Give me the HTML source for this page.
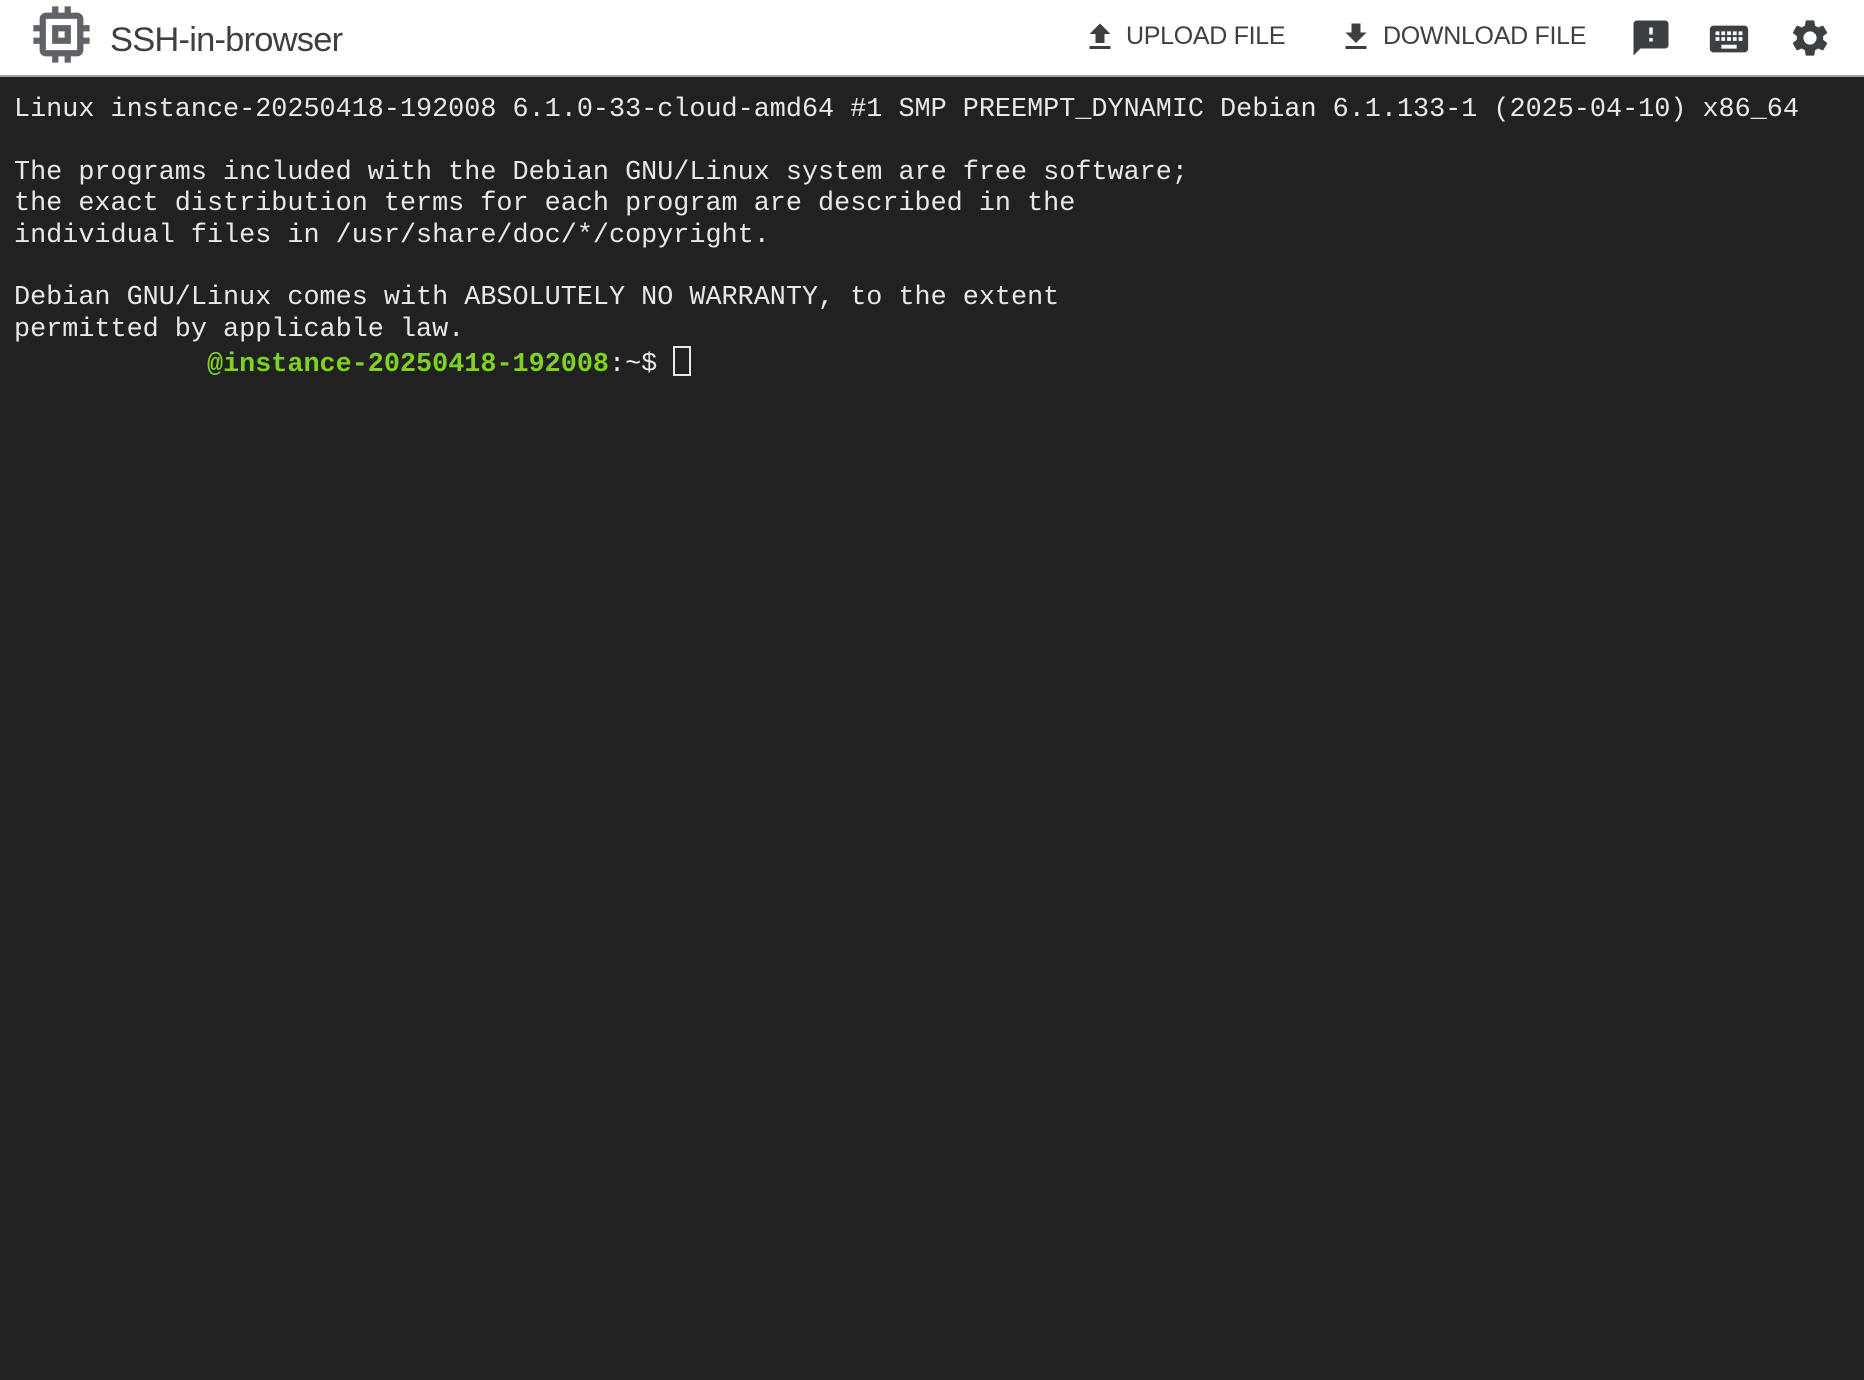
<!DOCTYPE html>
<html><head><meta charset="utf-8"><style>
html,body{margin:0;padding:0;width:1864px;height:1380px;overflow:hidden;background:#212121}
.hdr{position:absolute;left:0;top:0;width:1864px;height:75px;background:#fff;border-bottom:2px solid #9e9e9e}
.title{position:absolute;left:110px;top:21px;font:34.5px "Liberation Sans",sans-serif;color:#3c4043;letter-spacing:-0.8px}
.btn{position:absolute;top:22px;font:25px "Liberation Sans",sans-serif;color:#3c4043;letter-spacing:-0.3px}
svg{position:absolute}
.term{position:absolute;left:14px;top:95px;font:26.8px/31.4px "Liberation Mono",monospace;color:#e8e8e8;white-space:pre;margin:0}
.g{color:#7ed321;font-weight:bold}
.cur{display:inline-block;width:14px;height:26px;border:2px solid #e8e8e8;vertical-align:-5px;line-height:0}
</style></head><body>
<div class="hdr">
<svg style="left:24px;top:-3px" width="75" height="75" viewBox="0 0 24 24"><path fill="#5f6368" d="M15 9H9v6h6V9zm-2 4h-2v-2h2v2zm8-2V9h-2V7c0-1.1-.9-2-2-2h-2V3h-2v2h-2V3H9v2H7c-1.1 0-2 .9-2 2v2H3v2h2v2H3v2h2v2c0 1.1.9 2 2 2h2v2h2v-2h2v2h2v-2h2c1.1 0 2-.9 2-2v-2h2v-2h-2v-2h2zm-4 6H7V7h10v10z"/></svg>
<div class="title">SSH-in-browser</div>
<svg style="left:1082px;top:19px" width="36" height="36" viewBox="0 0 24 24"><path fill="#3c4043" d="M9 16h6v-6h4l-7-7-7 7h4zm-4 2h14v2H5z"/></svg>
<div class="btn" style="left:1126px">UPLOAD FILE</div>
<svg style="left:1338px;top:19px" width="36" height="36" viewBox="0 0 24 24"><path fill="#3c4043" d="M19 9h-4V3H9v6H5l7 7 7-7zM5 18v2h14v-2H5z"/></svg>
<div class="btn" style="left:1383px">DOWNLOAD FILE</div>
<svg style="left:1630px;top:17px" width="42" height="42" viewBox="0 0 24 24"><path fill="#3c4043" d="M20 2H4c-1.1 0-2 .9-2 2v18l4-4h14c1.1 0 2-.9 2-2V4c0-1.1-.9-2-2-2zm-7 12h-2v-2h2v2zm0-4h-2V6h2v4z"/></svg>
<svg style="left:1706px;top:16px" width="46" height="46" viewBox="0 0 24 24"><path fill="#3c4043" d="M20 5H4c-1.1 0-2 .9-2 2v10c0 1.1.9 2 2 2h16c1.1 0 2-.9 2-2V7c0-1.1-.9-2-2-2zm-9 3h2v2h-2V8zm0 3h2v2h-2v-2zM8 8h2v2H8V8zm0 3h2v2H8v-2zm-1 2H5v-2h2v2zm0-3H5V8h2v2zm9 7H8v-2h8v2zm0-4h-2v-2h2v2zm0-3h-2V8h2v2zm3 3h-2v-2h2v2zm0-3h-2V8h2v2z"/></svg>
<svg style="left:1788px;top:16px" width="44" height="44" viewBox="0 0 24 24"><path fill="#3c4043" d="M19.14 12.94c.04-.3.06-.61.06-.94 0-.32-.02-.64-.07-.94l2.03-1.58a.49.49 0 0 0 .12-.61l-1.92-3.32a.488.488 0 0 0-.59-.22l-2.39.96c-.5-.38-1.03-.7-1.62-.94l-.36-2.54a.484.484 0 0 0-.48-.41h-3.84c-.24 0-.43.17-.47.41l-.36 2.54c-.59.24-1.13.57-1.620.94l-2.39-.96c-.22-.08-.47 0-.59.22L2.74 8.87c-.12.21-.08.47.12.61l2.03 1.58c-.05.3-.09.63-.09.94s.02.64.07.94l-2.03 1.58a.49.49 0 0 0-.12.61l1.92 3.32c.12.22.37.29.59.22l2.39-.96c.5.38 1.03.7 1.62.94l.36 2.54c.05.24.24.41.48.41h3.840c.24 0 .44-.17.47-.41l.36-2.54c.59-.24 1.13-.56 1.62-.94l2.39.96c.22.08.47 0 .59-.22l1.92-3.32c.12-.22.07-.47-.12-.61l-2.01-1.58zM12 15.6c-1.98 0-3.6-1.62-3.6-3.6s1.62-3.6 3.6-3.6 3.6 1.62 3.6 3.6-1.62 3.6-3.6 3.6z"/></svg>
</div>
<pre class="term">Linux instance-20250418-192008 6.1.0-33-cloud-amd64 #1 SMP PREEMPT_DYNAMIC Debian 6.1.133-1 (2025-04-10) x86_64

The programs included with the Debian GNU/Linux system are free software;
the exact distribution terms for each program are described in the
individual files in /usr/share/doc/*/copyright.

Debian GNU/Linux comes with ABSOLUTELY NO WARRANTY, to the extent
permitted by applicable law.
            <span class="g">@instance-20250418-192008</span>:~$ <span class="cur"></span></pre>
</body></html>
